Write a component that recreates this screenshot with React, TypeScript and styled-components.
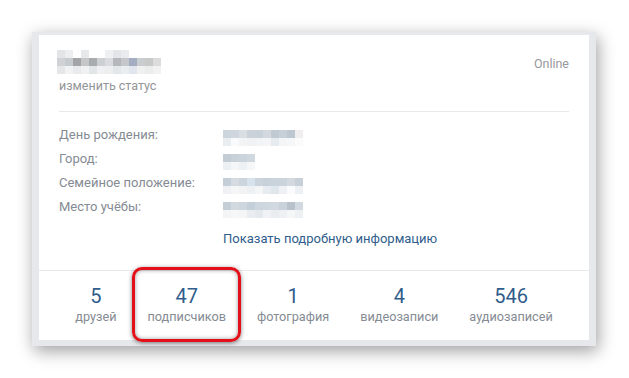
import React from "react";
import styled, { createGlobalStyle } from "styled-components";

const GlobalStyle = createGlobalStyle`
  html, body {
    margin: 0;
    padding: 0;
    background: #ffffff;
  }
  body {
    font-family: Roboto, "Open Sans", "Liberation Sans", sans-serif;
  }
`;

type BlurRow = string[];

const nameBlur: BlurRow[] = [
  ["#e2e4e6", "#eceef0", "#ffffff", "#e6e8ea", "#ffffff", "#ffffff", "#eef0f2", "#e3e5e8", "#e9ebee", "#ffffff", "#ffffff", "#ffffff", "#ffffff"],
  ["#d0d3d6", "#c5cbcf", "#a3a5a8", "#c4c6c8", "#a9acae", "#cdd0d3", "#d8dbe0", "#b4b7bb", "#c4c8cb", "#a5adc2", "#cacdd0", "#c8cac9", "#dcdcdc"],
  ["#e5e7e9", "#f1f2f3", "#e8eaeb", "#f0f1f2", "#e3e6e7", "#eff0f1", "#eceef0", "#e4e7ea", "#eaeef1", "#e0e5ee", "#eff0f0", "#ececec", "#f2f2f2"],
];

const birthBlur: BlurRow[] = [
  ["#ccd4dc", "#d0d6dd", "#d9dee3", "#cbd2d9", "#c9d1d9", "#d3d9df", "#bfcad3", "#c7d0d8", "#bcc7d1", "#f1eef0"],
  ["#eaedf0", "#f9fafb", "#f2f4f5", "#f0f2f4", "#f2f4f6", "#f4f5f7", "#e6ebef", "#f3f5f6", "#f6f7f8", "#fbfbfc"],
];

const cityBlur: BlurRow[] = [
  ["#c3ccd5", "#c8d0d8", "#cbd3dc", "#d0d8df"],
  ["#edf0f3", "#f4f6f7", "#eef1f4", "#f6f7f8"],
];

const familyBlur: BlurRow[] = [
  ["#c4ced8", "#d5dbe1", "#ccd5dd", "#d6e3ec", "#cbd4dc", "#c7d1da", "#c9d3dc", "#cbd3db", "#d3d9df", "#c7d0d8"],
  ["#eff1f4", "#f5f6f8", "#f1f3f5", "#eef1f4", "#f3f5f7", "#e6ecf1", "#dfe6ec", "#eff1f4", "#fafbfc", "#eef1f4"],
];

const schoolBlur: BlurRow[] = [
  ["#c3ced7", "#d2d9df", "#cdd6de", "#c3d0da", "#cdd6de", "#cfd7de", "#d1d8df", "#c9d1da", "#b8c1cc", "#d3d9e0"],
  ["#f3f5f6", "#f6f7f8", "#f4f5f7", "#e9edf1", "#e4e9ee", "#f0f2f5", "#e9edf0", "#eef0f3", "#f5f6f8", "#eef1f3"],
];

const PixelBlur: React.FC<{ rows: BlurRow[]; cell?: number }> = ({ rows, cell = 8 }) => {
  const cols = Math.max(...rows.map((r) => r.length));
  return (
    <svg
      width={cols * cell}
      height={rows.length * cell}
      shapeRendering="crispEdges"
      style={{ display: "block" }}
    >
      {rows.map((row, y) =>
        row.map((c, x) => (
          <rect key={`${x}-${y}`} x={x * cell} y={y * cell} width={cell} height={cell} fill={c} />
        ))
      )}
    </svg>
  );
};

const infoRows = [
  { label: "День рождения:", blur: birthBlur },
  { label: "Город:", blur: cityBlur },
  { label: "Семейное положение:", blur: familyBlur },
  { label: "Место учёбы:", blur: schoolBlur },
];

const counters = [
  { count: "5", label: "друзей" },
  { count: "47", label: "подписчиков", marked: true },
  { count: "1", label: "фотография" },
  { count: "4", label: "видеозаписи" },
  { count: "546", label: "аудиозаписей" },
];

const App: React.FC = () => {
  return (
    <>
      <GlobalStyle />
      <Page>
        <Frame>
          <Card>
            <Header>
              <NameBlock>
                <PixelBlur rows={nameBlur} />
                <StatusLink>изменить статус</StatusLink>
              </NameBlock>
              <OnlineText>Online</OnlineText>
            </Header>
            <Info>
              {infoRows.map((row) => (
                <InfoRow key={row.label}>
                  <InfoLabel>{row.label}</InfoLabel>
                  <InfoValue>
                    <PixelBlur rows={row.blur} />
                  </InfoValue>
                </InfoRow>
              ))}
              <InfoRow>
                <InfoLabel />
                <MoreLink>Показать подробную информацию</MoreLink>
              </InfoRow>
            </Info>
            <Counters>
              {counters.map((c) => (
                <Counter key={c.label} marked={c.marked}>
                  <CounterNumber>{c.count}</CounterNumber>
                  <CounterLabel>{c.label}</CounterLabel>
                </Counter>
              ))}
            </Counters>
          </Card>
        </Frame>
      </Page>
    </>
  );
};

const Page = styled.div`
  width: 629px;
  height: 378px;
  padding: 32px 0 0 32px;
  box-sizing: border-box;
  overflow: hidden;
`;

const Frame = styled.div`
  width: 564px;
  height: 314px;
  box-sizing: border-box;
  padding: 3px 7px 6px 7px;
  background: #e7e8eb;
  box-shadow: 2px 5px 16px rgba(0, 0, 0, 0.38);
`;

const Card = styled.div`
  width: 550px;
  height: 305px;
  background: #ffffff;
  box-sizing: border-box;
  display: flex;
  flex-direction: column;
`;

const Header = styled.div`
  display: flex;
  justify-content: space-between;
  align-items: flex-start;
  margin: 0 20px;
  padding: 15px 0 17px;
  border-bottom: 1px solid #e7e8ec;
`;

const NameBlock = styled.div`
  display: flex;
  flex-direction: column;
  margin-left: -2px;
`;

const StatusLink = styled.span`
  margin: 4px 0 0 2px;
  font-size: 12.5px;
  line-height: 16px;
  color: #939598;
`;

const OnlineText = styled.span`
  margin-top: 6px;
  font-size: 12.5px;
  line-height: 16px;
  color: #96999d;
`;

const Info = styled.div`
  display: flex;
  flex-direction: column;
  padding: 11px 20px 0;
`;

const InfoRow = styled.div`
  display: flex;
  align-items: center;
  height: 24px;
`;

const InfoLabel = styled.span`
  width: 164px;
  flex: none;
  font-size: 13px;
  line-height: 24px;
  color: #858b93;
`;

const InfoValue = styled.div`
  display: flex;
  align-items: center;
  height: 24px;
  padding-top: 6px;
  box-sizing: border-box;
  align-self: flex-start;
`;

const MoreLink = styled.span`
  margin-top: 15px;
  font-size: 13px;
  line-height: 24px;
  color: #2f5d8c;
`;

const Counters = styled.div`
  margin-top: auto;
  height: 70px;
  box-sizing: border-box;
  display: flex;
  justify-content: center;
  border-top: 1px solid #e7e8ec;
`;

const Counter = styled.div<{ marked?: boolean }>`
  position: relative;
  display: flex;
  flex-direction: column;
  align-items: center;
  padding: 13px 15.5px 0;

  &::after {
    content: "";
    display: ${({ marked }) => (marked ? "block" : "none")};
    position: absolute;
    top: -4px;
    bottom: -2px;
    left: 0;
    right: 0;
    border: 3px solid #e3101a;
    border-radius: 10px;
    box-shadow: 0 1px 4px rgba(0, 0, 0, 0.5), inset 0 0 4px rgba(0, 0, 0, 0.4);
  }
`;

const CounterNumber = styled.span`
  font-size: 20px;
  line-height: 24px;
  color: #2f5d8c;
`;

const CounterLabel = styled.span`
  margin-top: 1px;
  font-size: 12.7px;
  line-height: 16px;
  color: #858b93;
`;

export default App;
